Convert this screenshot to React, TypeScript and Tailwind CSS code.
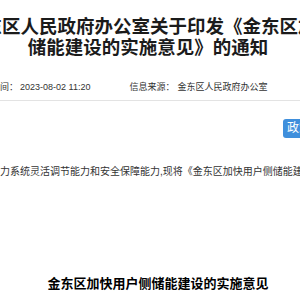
const cjk = { fontFamily: '"Liberation Sans", "Noto Sans CJK SC", sans-serif' };

export default function App() {
  return (
    <div className="relative w-[300px] h-[300px] overflow-hidden bg-white" style={cjk}>
      <div className="pt-[16px] text-[18.5px] font-bold text-[#1b1b1b] whitespace-nowrap">
        <div className="h-[21px] leading-[21px] -ml-[35px]">金东区人民政府办公室关于印发《金东区加快用户侧</div>
        <div className="h-[21px] leading-[21px] w-[296px] text-center">储能建设的实施意见》的通知</div>
      </div>

      <div className="mt-[23px] h-[12px] flex items-center text-[9px] leading-[12px] text-[#333] whitespace-nowrap">
        <span className="-ml-[27px]">发布时间：</span>
        <span className="ml-[2px]">2023-08-02 11:20</span>
        <span className="ml-[39px]">信息来源：</span>
        <span className="ml-[3px]">金东区人民政府办公室</span>
      </div>

      <div className="mt-[7px] h-px bg-[#e3e3e3]" />

      <div className="mt-[64px] h-[14px] text-[10px] leading-[14px] text-[#333] whitespace-nowrap">
        力系统灵活调节能力和安全保障能力,现将《金东区加快用户侧储能建设的实施意见》印发给你们
      </div>

      <div className="mt-[97px] h-[16px] w-[316px] text-center text-[13px] leading-[16px] font-bold text-black whitespace-nowrap">
        金东区加快用户侧储能建设的实施意见
      </div>

      <div className="absolute left-[283px] top-[119px] h-[19px] w-[50px] rounded-[3px] bg-[#3f8fdc] pl-[4px] text-[12px] leading-[19px] text-white whitespace-nowrap">
        政策解读
      </div>
    </div>
  );
}
